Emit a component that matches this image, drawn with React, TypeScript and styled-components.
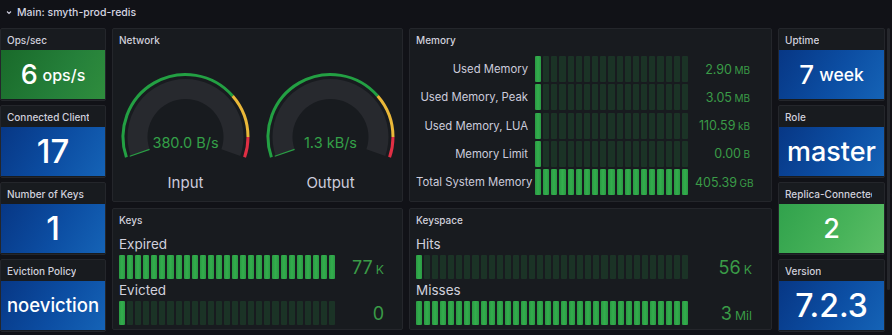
import React from 'react';
import styled, { createGlobalStyle } from 'styled-components';

const GlobalStyle = createGlobalStyle`
  html, body {
    margin: 0;
    padding: 0;
    background: #111217;
  }
  body {
    font-family: Inter, "Noto Sans", "Liberation Sans", sans-serif;
    color: #ccccdc;
  }
`;

const VALUE_GREEN = '#3a9b47';

const Page = styled.div`
  position: relative;
  width: 892px;
  height: 335px;
  overflow: hidden;
  background: #111217;
`;

const RowHeader = styled.div`
  height: 28px;
  display: flex;
  align-items: center;
  gap: 5px;
  padding-left: 6px;
  font-size: 10.5px;
  font-weight: 500;
  color: #d4d4e0;
  box-sizing: border-box;
  padding-bottom: 4px;
`;

const Grid = styled.div`
  display: grid;
  grid-template-columns: 106px 291px 363px 107px;
  grid-template-rows: 174px 122px;
  column-gap: 6px;
  row-gap: 6px;
`;

const SideColumn = styled.div<{ $col: number }>`
  grid-column: ${(p) => p.$col};
  grid-row: 1 / span 2;
  display: flex;
  flex-direction: column;
  gap: 4px;
  align-self: start;
`;

const Panel = styled.div`
  background: #181b1f;
  border: 1px solid #24262b;
  border-radius: 2px;
  display: flex;
  flex-direction: column;
  box-sizing: border-box;
  min-width: 0;
`;

const PanelTitle = styled.div<{ $clip?: number }>`
  height: 21px;
  flex: none;
  display: flex;
  align-items: center;
  padding: 0 ${(p) => p.$clip ?? 6}px 0 6px;
  font-size: 10px;
  font-weight: 500;
  color: #d0d0dc;
  white-space: nowrap;
  overflow: hidden;
`;

const TitleText = styled.span`
  display: block;
  min-width: 0;
  overflow: hidden;
`;

const StatPanel = styled(Panel)`
  height: 73px;
`;

const StatBox = styled.div<{ $bg: string }>`
  flex: 1;
  margin-bottom: 1px;
  background: ${(p) => p.$bg};
  display: flex;
  align-items: center;
  justify-content: center;
  color: #ffffff;
  font-weight: 500;
  white-space: nowrap;
  overflow: hidden;
`;

const StatValue = styled.span<{ $size: number }>`
  font-size: ${(p) => p.$size}px;
  line-height: 1;
`;

const StatUnit = styled.span<{ $size: number }>`
  font-size: ${(p) => p.$size}px;
  margin-left: 0.3em;
`;

const BLUE = 'linear-gradient(120deg, #073785 0%, #0c4ea3 55%, #1563b6 100%)';
const DARK_GREEN = 'linear-gradient(120deg, #196a2a 0%, #25803a 60%, #2f8d3d 100%)';
const LIGHT_GREEN = 'linear-gradient(120deg, #31a24c 0%, #48b35a 60%, #5cbe66 100%)';

interface StatProps {
  title: string;
  value: string;
  size: number;
  unit?: string;
  unitSize?: number;
  bg: string;
  clip?: number;
}

function Stat({ title, value, size, unit, unitSize = 16, bg, clip }: StatProps) {
  return (
    <StatPanel>
      <PanelTitle $clip={clip}>
        <TitleText>{title}</TitleText>
      </PanelTitle>
      <StatBox $bg={bg}>
        <StatValue $size={size}>{value}</StatValue>
        {unit && <StatUnit $size={unitSize}>{unit}</StatUnit>}
      </StatBox>
    </StatPanel>
  );
}

/* ---------- Gauge ---------- */

const GaugeRow = styled.div`
  flex: 1;
  display: grid;
  grid-template-columns: 1fr 1fr;
`;

const GaugeCell = styled.div`
  display: flex;
  flex-direction: column;
  align-items: center;
  padding-top: 18px;
`;

const GaugeLabel = styled.div`
  margin-top: 9px;
  font-size: 15px;
  line-height: 20px;
  color: #ccccdc;
`;

const polar = (cx: number, cy: number, r: number, deg: number) => {
  const a = (deg * Math.PI) / 180;
  return [cx + r * Math.sin(a), cy - r * Math.cos(a)];
};

const arc = (cx: number, cy: number, r: number, a1: number, a2: number) => {
  const [x1, y1] = polar(cx, cy, r, a1);
  const [x2, y2] = polar(cx, cy, r, a2);
  const large = a2 - a1 > 180 ? 1 : 0;
  return `M${x1.toFixed(2)} ${y1.toFixed(2)} A${r} ${r} 0 ${large} 1 ${x2.toFixed(2)} ${y2.toFixed(2)}`;
};

function Gauge({ value, label }: { value: string; label: string }) {
  const cx = 72.5;
  const cy = 69;
  const start = -109;
  const end = 109;
  const [lx1, ly1] = polar(cx, cy, 38, start);
  const [lx2, ly2] = polar(cx, cy, 59, start);
  return (
    <GaugeCell>
      <svg width="145" height="96" viewBox="0 0 145 96">
        <path d={arc(cx, cy, 48, start, end)} stroke="#27292e" strokeWidth="20" fill="none" />
        <path d={arc(cx, cy, 62.5, start, 49)} stroke="#23a043" strokeWidth="3" fill="none" />
        <path d={arc(cx, cy, 62.5, 49, 90)} stroke="#eab839" strokeWidth="3" fill="none" />
        <path d={arc(cx, cy, 62.5, 90, end)} stroke="#e02f44" strokeWidth="3" fill="none" />
        <line x1={lx1} y1={ly1} x2={lx2} y2={ly2} stroke="#2a9f45" strokeWidth="1.2" />
        <text
          x={cx}
          y="80"
          textAnchor="middle"
          fontSize="14.5"
          fontFamily="Inter, sans-serif"
          fill="#34a048"
        >
          {value}
        </text>
      </svg>
      <GaugeLabel>{label}</GaugeLabel>
    </GaugeCell>
  );
}

/* ---------- LCD bar gauge ---------- */

const Cells = styled.div<{ $h: number }>`
  flex: 1;
  height: ${(p) => p.$h}px;
  display: flex;
  gap: 2px;
`;

const Cell = styled.div<{ $on: boolean }>`
  flex: 1;
  border-radius: 1px;
  background: ${(p) => (p.$on ? 'linear-gradient(90deg, #2a9a43, #33ad4d 50%, #2a9a43)' : 'rgba(42, 159, 69, 0.19)')};
`;

function LcdBar({ count, lit, height }: { count: number; lit: number; height: number }) {
  return (
    <Cells $h={height}>
      {Array.from({ length: count }, (_, i) => (
        <Cell key={i} $on={i < lit} />
      ))}
    </Cells>
  );
}

const MemoryGrid = styled.div`
  display: grid;
  grid-template-columns: 112px 153px 55px;
  column-gap: 7px;
  grid-auto-rows: 26px;
  row-gap: 2.3px;
  padding: 6px 0 0 6px;
  align-items: center;
`;

const MemLabel = styled.div`
  text-align: right;
  font-size: 11.3px;
  color: #ccccdc;
  white-space: nowrap;
`;

const MemValue = styled.div`
  text-align: right;
  font-size: 12.5px;
  color: ${VALUE_GREEN};
  white-space: nowrap;
`;

const SmallUnit = styled.span<{ $scale?: number }>`
  font-size: ${(p) => p.$scale ?? 0.8}em;
  margin-left: 0.25em;
`;

const memoryRows = [
  { label: 'Used Memory', value: '2.90', unit: 'MB', lit: 1 },
  { label: 'Used Memory, Peak', value: '3.05', unit: 'MB', lit: 1 },
  { label: 'Used Memory, LUA', value: '110.59', unit: 'kB', lit: 1 },
  { label: 'Memory Limit', value: '0.00', unit: 'B', lit: 1 },
  { label: 'Total System Memory', value: '405.39', unit: 'GB', lit: 19 },
];

const Keys = styled.div<{ $right: number }>`
  display: flex;
  flex-direction: column;
  padding: 3px ${(p) => p.$right}px 0 6px;
`;

const KeyLabel = styled.div`
  height: 22px;
  display: flex;
  align-items: center;
  font-size: 13.5px;
  color: #d0d0dc;
`;

const KeyRow = styled.div`
  display: flex;
  align-items: center;
`;

const KeyValue = styled.div<{ $w: number }>`
  width: ${(p) => p.$w}px;
  flex: none;
  text-align: right;
  font-size: 18px;
  color: ${VALUE_GREEN};
`;

interface KeyItem {
  label: string;
  value: string;
  unit?: string;
  lit: number;
}

function KeyBars({ items, count, valueWidth, right }: { items: KeyItem[]; count: number; valueWidth: number; right: number }) {
  return (
    <Keys $right={right}>
      {items.map((it) => (
        <React.Fragment key={it.label}>
          <KeyLabel>{it.label}</KeyLabel>
          <KeyRow>
            <LcdBar count={count} lit={it.lit} height={24} />
            <KeyValue $w={valueWidth}>
              {it.value}
              {it.unit && <SmallUnit $scale={0.68}>{it.unit}</SmallUnit>}
            </KeyValue>
          </KeyRow>
        </React.Fragment>
      ))}
    </Keys>
  );
}

const Chevron = () => (
  <svg width="6" height="5" viewBox="0 0 6 5">
    <path d="M1 1.5l2 2 2-2" stroke="#ccccdc" strokeWidth="1.1" fill="none" />
  </svg>
);

const Scrollbar = styled.div`
  position: absolute;
  right: 2px;
  top: 28px;
  width: 3px;
  height: 262px;
  border-radius: 2px;
  background: #25272c;
`;

export default function App() {
  return (
    <Page>
      <GlobalStyle />
      <RowHeader>
        <Chevron />
        <span>Main: smyth-prod-redis</span>
      </RowHeader>
      <Grid>
        <SideColumn $col={1}>
          <Stat title="Ops/sec" value="6" size={27} unit="ops/s" unitSize={16} bg={DARK_GREEN} />
          <Stat title="Connected Clients" value="17" size={33} bg={BLUE} clip={16} />
          <Stat title="Number of Keys" value="1" size={33} bg={BLUE} />
          <Stat title="Eviction Policy" value="noeviction" size={18.5} bg={BLUE} />
        </SideColumn>

        <Panel style={{ gridColumn: 2, gridRow: 1 }}>
          <PanelTitle>Network</PanelTitle>
          <GaugeRow>
            <Gauge value="380.0 B/s" label="Input" />
            <Gauge value="1.3 kB/s" label="Output" />
          </GaugeRow>
        </Panel>

        <Panel style={{ gridColumn: 3, gridRow: 1 }}>
          <PanelTitle>Memory</PanelTitle>
          <MemoryGrid>
            {memoryRows.map((r) => (
              <React.Fragment key={r.label}>
                <MemLabel>{r.label}</MemLabel>
                <LcdBar count={19} lit={r.lit} height={26} />
                <MemValue>
                  {r.value}
                  <SmallUnit>{r.unit}</SmallUnit>
                </MemValue>
              </React.Fragment>
            ))}
          </MemoryGrid>
        </Panel>

        <Panel style={{ gridColumn: 2, gridRow: 2 }}>
          <PanelTitle>Keys</PanelTitle>
          <KeyBars
            count={27}
            valueWidth={49}
            right={18}
            items={[
              { label: 'Expired', value: '77', unit: 'K', lit: 27 },
              { label: 'Evicted', value: '0', lit: 1 },
            ]}
          />
        </Panel>

        <Panel style={{ gridColumn: 3, gridRow: 2 }}>
          <PanelTitle>Keyspace</PanelTitle>
          <KeyBars
            count={34}
            valueWidth={64}
            right={19}
            items={[
              { label: 'Hits', value: '56', unit: 'K', lit: 1 },
              { label: 'Misses', value: '3', unit: 'Mil', lit: 34 },
            ]}
          />
        </Panel>

        <SideColumn $col={4}>
          <Stat title="Uptime" value="7" size={26} unit="week" unitSize={17.5} bg={BLUE} />
          <Stat title="Role" value="master" size={27} bg={BLUE} />
          <Stat title="Replica-Connected" value="2" size={27} bg={LIGHT_GREEN} clip={12} />
          <Stat title="Version" value="7.2.3" size={32} bg={BLUE} />
        </SideColumn>
      </Grid>
      <Scrollbar />
    </Page>
  );
}
